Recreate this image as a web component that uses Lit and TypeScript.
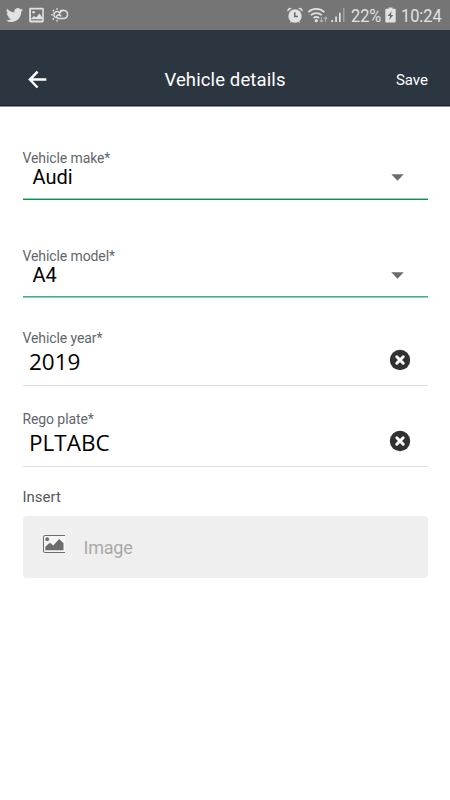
import { LitElement, html, css } from "lit";
import { customElement, property } from "lit/decorators.js";

@customElement("status-bar")
class StatusBar extends LitElement {
  static styles = css`
    :host {
      display: flex;
      box-sizing: border-box;
      height: 30px;
      background: #757575;
      color: #e2e2e2;
      align-items: center;
      justify-content: space-between;
      padding: 0 8px 0 6px;
    }
    .group { display: flex; align-items: center; height: 30px; }
    svg { display: block; }
    .twitter { margin-right: 6px; }
    .picture { margin-right: 6px; }
    .alarm { margin-right: 5px; }
    .wifi { margin-right: 3px; }
    .signal { margin-right: 6px; }
    .battery { margin: 0 5px 0 4px; }
    .text {
      font: 19px/30px Roboto, sans-serif;
      padding-top: 1px;
      white-space: nowrap;
    }
    .percent { width: 30px; }
    .clock { width: 41px; }
    .text span { display: inline-block; transform-origin: 0 50%; transform: scaleX(0.86); }
  `;
  render() {
    return html`
      <div class="group">
        <svg class="twitter" width="17" height="16" viewBox="0 0 24 22" fill="#e2e2e2">
          <path d="M24 3.6a9.8 9.8 0 0 1-2.8.8 4.9 4.9 0 0 0 2.1-2.7c-1 .6-2 1-3.1 1.2a4.9 4.9 0 0 0-8.4 4.5C7.700 7.200 4.100 5.200 1.700 2.200a4.900 4.900 0 0 0 1.500 6.600c-.8 0-1.600-.2-2.200-.6v.1a4.900 4.900 0 0 0 3.900 4.800c-.7.2-1.500.2-2.200.1a4.900 4.900 0 0 0 4.600 3.400A9.900 9.900 0 0 1 0 18.600a13.900 13.900 0 0 0 7.500 2.200c9.100 0 14-7.500 14-14v-.6c1-.7 1.800-1.600 2.500-2.600z"/>
        </svg>
        <svg class="picture" width="16" height="16" viewBox="0 0 16 16">
          <path fill="#e2e2e2" fill-rule="evenodd" d="M1.500.8h12a1.300 1.300 0 0 1 1.300 1.300v12a1.300 1.300 0 0 1-1.300 1.300h-12A1.300 1.300 0 0 1 .2 14.100v-12A1.300 1.300 0 0 1 1.500.8zM2 2.500v11h11.200v-11z"/>
          <path fill="#e2e2e2" d="M2 11.800l3-2.900 2 1.600 3.600-4 2.800 4.200v1.500H2z"/>
          <circle cx="4.600" cy="5.200" r="1.300" fill="#e2e2e2"/>
        </svg>
        <svg width="18" height="16" viewBox="0 0 18 16" fill="none" stroke="#e2e2e2" stroke-width="1.500">
          <path d="M4.800 10.600A3.200 3.200 0 1 1 8.600 5.700"/>
          <path d="M8.300 8.300a1.700 1.700 0 1 0-.9 3.100h5.100a4 4 0 1 0-3.900-4.800c-.2 1.300.5 2.300 1.700 2.300"/>
          <path d="M6.100 1.200v1.500M1.900 3l1.100 1.100M.2 7.700h1.500M1.700 12.600l1.200-1.200M6.100 13v1.500M10.300 2.900l-1 1.100"/>
        </svg>
      </div>
      <div class="group">
        <svg class="alarm" width="16" height="17" viewBox="0 0 16 17">
          <g fill="#e2e2e2"><circle cx="8" cy="9" r="6.700"/><path d="M.4 4.600A3 3 0 0 1 4.800 1.200zM15.600 4.600A3 3 0 0 0 11.200 1.200zM2.500 16.200l2-3 1.500 1zM13.500 16.200l-2-3-1.500 1z"/></g>
          <path d="M7.800 5.300v4.200h3.200" fill="none" stroke="#6b6b6b" stroke-width="1.500"/>
        </svg>
        <svg class="wifi" width="20" height="17" viewBox="0 0 20 17" fill="none" stroke="#e2e2e2" stroke-width="1.700">
          <path d="M.3 5.100a11.700 11.700 0 0 1 16 0M2.900 8.200a8 8 0 0 1 10.800 0M5.500 11.100a4.300 4.300 0 0 1 5.600 0"/>
          <circle cx="8.300" cy="13.700" r="1.600" fill="#e2e2e2" stroke="none"/>
          <path stroke="#b0b0b0" stroke-width="1.100" d="M13.500 10v4.800M11.900 13.200l1.600 1.700 1.600-1.700M17.600 14.900V10.100M16 11.800l1.600-1.700 1.600 1.700"/>
        </svg>
        <svg class="signal" width="14" height="16" viewBox="0 0 14 16">
          <path fill="#e2e2e2" d="M.3 13h1.700v2H.3zM4.200 9.600h1.700V15H4.200zM8 5.700h1.700V15H8z"/>
          <path fill="#a1a1a1" d="M12 1h1.500v14H12z"/>
        </svg>
        <div class="text percent"><span>22%</span></div>
        <svg class="battery" width="11" height="16" viewBox="0 0 11 16">
          <path fill="#e2e2e2" d="M3.500.5h4v1.300h2.200c.6 0 1 .4 1 1v11.700c0 .6-.4 1-1 1H1.300c-.6 0-1-.4-1-1V2.800c0-.6.4-1 1-1h2.200z"/>
          <path fill="#6b6b6b" d="M6.700 4.200L2.600 9h2.500l-.9 3.900L8.400 8H5.900z"/>
        </svg>
        <div class="text clock"><span>10:24</span></div>
      </div>
    `;
  }
}

@customElement("form-field")
class FormField extends LitElement {
  @property() label = "";
  @property() value = "";
  @property({ reflect: true }) kind = "select";
  static styles = css`
    :host {
      display: flex;
      flex-direction: column;
      box-sizing: border-box;
      height: 51px;
      font-family: Roboto, sans-serif;
    }
    :host([kind="input"]) { height: 57px; border-bottom: 1px solid #dcdcdc; }
    .label { font-size: 14px; line-height: 18px; height: 18px; color: #62666b; letter-spacing: -0.1px; }
    .row { display: flex; align-items: center; justify-content: space-between; }
    .select { height: 20px; padding: 0 24px 0 10px; font-size: 20px; color: #000; }
    .line {
      margin-top: auto;
      height: 2px;
      background: linear-gradient(var(--line-top, #7fdca6) 50%, var(--line-bottom, #1c8a50) 50%);
    }
    .input {
      height: 30px;
      padding: 0 17px 0 6.500px;
      font: 22.500px/30px "Open Sans", "Noto Sans", sans-serif;
      color: #000;
    }
    svg { display: block; }
    .input svg { margin-top: -5px; }
  `;
  render() {
    return html`
      <div class="label">${this.label}</div>
      ${this.kind === "select"
        ? html`<div class="row select">
              <span>${this.value}</span>
              <svg width="13" height="7" viewBox="0 0 13 7"><path d="M.3.3h12.400L6.500 6.700z" fill="#6c6c6c"/></svg>
            </div>
            <div class="line"></div>`
        : html`<div class="row input">
            <span>${this.value}</span>
            <svg width="22" height="22" viewBox="0 0 22 22">
              <circle cx="11" cy="11" r="10.200" fill="#313131"/>
              <path d="M7.800 7.800l6.400 6.400M14.200 7.800l-6.400 6.400" stroke="#fff" stroke-width="3" stroke-linecap="round"/>
            </svg>
          </div>`}
    `;
  }
}

@customElement("app-root")
class AppRoot extends LitElement {
  static styles = css`
    :host {
      display: block;
      height: 800px;
      background: #fff;
      font-family: Roboto, sans-serif;
      overflow: hidden;
    }
    .header {
      box-sizing: border-box;
      height: 76px;
      padding: 24px 22px 0 28px;
      background: #2c3640;
      border-bottom: 1px solid #1b242d;
      color: #fff;
      display: grid;
      grid-template-columns: 60px 1fr 66px;
      align-items: center;
    }
    .title { font-size: 18.500px; text-align: center; letter-spacing: 0.12px; padding-top: 1px; }
    .save { font-size: 15px; text-align: right; padding-top: 1px; }
    .form { padding: 42px 22.500px 0; border-top: 1px solid #84909a; display: flex; flex-direction: column; }
    .gap-l { margin-bottom: 47px; }
    .gap-m { margin-bottom: 31px; --line-top: #45ab8b; --line-bottom: #8fd2ba; }
    .gap-s { margin-bottom: 24px; }
    .insert { font-size: 15px; line-height: 20px; color: #55585c; margin: 20px 0 9px; }
    .upload {
      height: 62px;
      border-radius: 4px;
      background: #efefef;
      display: flex;
      align-items: center;
      padding-left: 19px;
      color: #a8a8a8;
      font-size: 18px;
    }
    .upload svg { margin: -6px 18px 0 0; }
    .upload span { letter-spacing: -0.2px; }
    svg { display: block; }
  `;
  render() {
    return html`
      <status-bar></status-bar>
      <div class="header">
        <svg width="20" height="20" viewBox="0 0 20 20" fill="none" stroke="#fff" stroke-width="2.500">
          <path d="M18.300 9.600H2.500M9.600 1.700L1.900 9.600l7.700 7.900"/>
        </svg>
        <div class="title">Vehicle details</div>
        <div class="save">Save</div>
      </div>
      <div class="form">
        <form-field class="gap-l" label="Vehicle make*" value="Audi"></form-field>
        <form-field class="gap-m" label="Vehicle model*" value="A4"></form-field>
        <form-field class="gap-s" kind="input" label="Vehicle year*" value="2019"></form-field>
        <form-field kind="input" label="Rego plate*" value="PLTABC"></form-field>
        <div class="insert">Insert</div>
        <div class="upload">
          <svg width="24" height="20" viewBox="0 0 24 20">
            <rect x="1.500" y="1.500" width="21.500" height="17" rx="1.500" fill="#f5f5f5"/>
            <path d="M23 1.500H3A1.500 1.500 0 0 0 1.500 3v14A1.500 1.500 0 0 0 3 18.500h20" fill="none" stroke="#6d6d6d"/>
            <circle cx="5.200" cy="5.200" r="1.900" fill="#6d6d6d"/>
            <path d="M3.300 16.300v-3.500l4.500-4 3.500 2.700 5.800-6.500 4.400 4.300v7z" fill="#6d6d6d"/>
          </svg>
          <span>Image</span>
        </div>
      </div>
    `;
  }
}
